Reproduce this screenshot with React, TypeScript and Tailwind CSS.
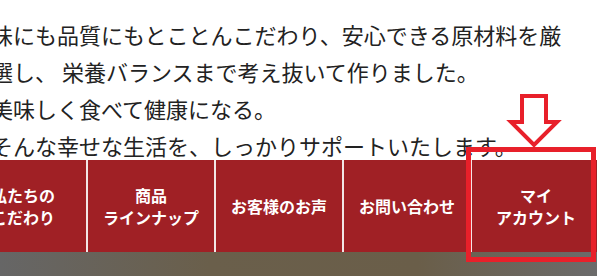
const navItems = [
  ["私たちの", "こだわり"],
  ["商品", "ラインナップ"],
  ["お客様のお声"],
  ["お問い合わせ"],
  ["マイ", "アカウント"],
];

const lines = [
  "味にも品質にもとことんこだわり、安心できる原材料を厳",
  "選し、 栄養バランスまで考え抜いて作りました。",
  "美味しく食べて健康になる。",
  "そんな幸せな生活を、しっかりサポートいたします。",
];

export default function App() {
  return (
    <div
      className="relative h-[276px] w-[597px] overflow-hidden bg-white"
      style={{ fontFamily: '"Noto Sans CJK JP", "Noto Sans", sans-serif' }}
    >
      {/* intro copy, cut at the left edge */}
      <div className="ml-[-9px] h-[160px] whitespace-nowrap pt-[16px] text-[22px] leading-[37px] text-[#222]">
        {lines.map((l) => (
          <p key={l}>{l}</p>
        ))}
      </div>

      {/* global nav */}
      <nav className="ml-[-40px] flex h-[92px] bg-[#a02025]">
        {navItems.map((item, i) => (
          <div
            key={i}
            className={
              "flex w-[128px] shrink-0 flex-col items-center justify-center text-[16px] font-bold leading-[22px] text-white " +
              (i < navItems.length - 1 ? "border-r-2 border-[#f3e6e6]" : "")
            }
          >
            {item.map((t) => (
              <span key={t}>{t}</span>
            ))}
          </div>
        ))}
      </nav>

      <div className="h-[24px] bg-[linear-gradient(90deg,#666666_0%,#6a5f4b_35%,#6a5e49_70%,#6b6b6b_100%)]" />

      {/* annotation overlay */}
      <div className="absolute left-[466px] top-[147px] h-[115px] w-[130px] border-[5px] border-[#e8202a]" />
      <svg
        className="absolute left-[500px] top-[90px]"
        width="66"
        height="62"
        viewBox="0 0 66 62"
      >
        <polygon
          points="22,6 46,6 46,32 57,32 34,55 11,32 22,32"
          fill="white"
          stroke="#e8202a"
          strokeWidth="4"
          strokeLinejoin="miter"
        />
      </svg>
    </div>
  );
}
